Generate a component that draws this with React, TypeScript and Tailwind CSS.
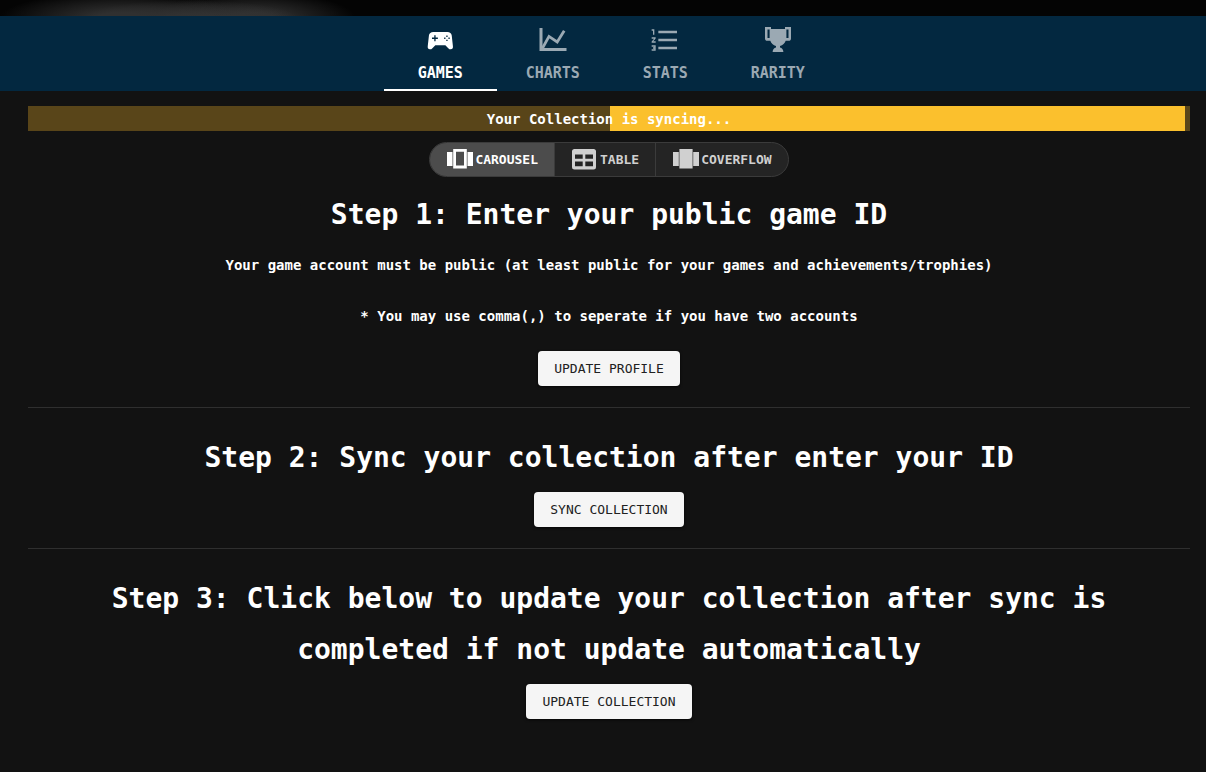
import type { ReactNode } from "react";
import { clsx } from "clsx";

function GamepadIcon() {
  return (
    <svg className="size-8" viewBox="0 0 24 24" fill="currentColor" aria-hidden="true">
      <path
        fillRule="evenodd"
        d="M21.700 16.700l-.9-8C20.600 6.900 19.300 6 17.600 6H6.900C5.200 6 3.900 6.900 3.700 8.700l-.9 8C2.600 18.200 3.300 19 4.400 19c.8 0 1.400-.3 1.900-.9L8.500 16h7.500l2.200 2.100c.5.6 1.100.9 1.900.9 1.100 0 1.800-.8 1.600-2.300zM10.400 11.200H8.700v1.800h-1v-1.800H6v-1h1.700V8.500h1v1.700h1.700zM16.700 8.700h1v1h-1zM15.100 10.200h1v1h-1zM18.300 10.200h1v1h-1zM16.700 11.800h1v1h-1z"
      />
    </svg>
  );
}

function LineChartIcon() {
  return (
    <svg className="size-8" viewBox="0 0 32 32" fill="none" stroke="currentColor" aria-hidden="true">
      <path d="M4 4v21.500H29.500" strokeWidth="3" />
      <path d="M5 25l7-12.600 8.200 5.600L27.200 6.800" strokeWidth="2.800" />
    </svg>
  );
}

function NumberedListIcon() {
  return (
    <svg className="size-8" viewBox="0 0 24 24" fill="currentColor" aria-hidden="true">
      <path d="M2 17h2v.5H3v1h1v.5H2v1h3v-4H2v1zm1-9h1V4H2v1h1v3zm-1 3h1.8L2 13.1v.9h3v-1H3.200L5 10.900V10H2v1zm5-6v2h14V5H7zm0 14h14v-2H7v2zm0-6h14v-2H7v2z" />
    </svg>
  );
}

function TrophyIcon() {
  return (
    <svg className="size-8" viewBox="0 0 32 32" fill="currentColor" aria-hidden="true">
      <path
        fillRule="evenodd"
        d="M3 3h6v2h14V3h6v11.500c0 1.400-.9 2.300-2.300 2.300h-3c-.8 2.600-2.900 4.500-5.700 5.200v1.600c2.100.6 3.200 1.900 3.400 4.400H10.600c.2-2.500 1.300-3.800 3.400-4.400V22c-2.800-.7-4.900-2.600-5.700-5.200h-3C3.900 16.800 3 15.900 3 14.500zM5.500 5.500v8.500h2.100V5.500zM24.400 5.500v8.500h2.100V5.500z"
      />
    </svg>
  );
}

function CarouselIcon() {
  return (
    <svg className="h-[22px] w-[26px]" viewBox="0 0 26 22" fill="currentColor" aria-hidden="true">
      <path fillRule="evenodd" d="M0 3h5.500v14H0zM20.500 3H26v14h-5.500zM6.200 0h13.600v19.500H6.200zM9 2.800v13.700h8V2.800z" />
    </svg>
  );
}

function TableIcon() {
  return (
    <svg className="h-[22px] w-[26px]" viewBox="0 0 26 22" fill="currentColor" aria-hidden="true">
      <path
        fillRule="evenodd"
        d="M2.500 0h19A2.500 2.500 0 0 1 24 2.500v15.500a2.500 2.500 0 0 1-2.500 2.500h-19A2.500 2.500 0 0 1 0 18V2.500A2.500 2.500 0 0 1 2.500 0zM3 5.500v4.300h7.700V5.500zM13.300 5.500v4.300H21V5.500zM3 12.500v4.700h7.700v-4.700zM13.300 12.500v4.700H21v-4.700z"
      />
    </svg>
  );
}

function CoverflowIcon() {
  return (
    <svg className="h-[22px] w-[26px]" viewBox="0 0 26 22" fill="currentColor" aria-hidden="true">
      <path d="M0 3h5.800v14H0zM20.200 3H26v14h-5.800zM6.400 0h13.200v19.500H6.400z" />
    </svg>
  );
}

const tabs = [
  { label: "GAMES", icon: <GamepadIcon />, selected: true },
  { label: "CHARTS", icon: <LineChartIcon />, selected: false },
  { label: "STATS", icon: <NumberedListIcon />, selected: false },
  { label: "RARITY", icon: <TrophyIcon />, selected: false },
];

const views = [
  { label: "CAROUSEL", icon: <CarouselIcon />, selected: true },
  { label: "TABLE", icon: <TableIcon />, selected: false },
  { label: "COVERFLOW", icon: <CoverflowIcon />, selected: false },
];

function Step({ title, action, children }: { title: string; action: string; children?: ReactNode }) {
  return (
    <section className="flex flex-col items-center text-center">
      <h2 className="max-w-[1040px] text-[28px] leading-[51px] font-bold">{title}</h2>
      {children}
      <button
        type="button"
        className="mt-[9px] h-[35px] rounded bg-[#f5f5f5] px-4 text-[13px] text-[#212121] shadow-sm shadow-black/60"
      >
        {action}
      </button>
    </section>
  );
}

export default function App() {
  return (
    <div className="min-h-screen bg-[#121212] font-['DejaVu_Sans_Mono','Liberation_Mono',monospace] text-white">
      <div className="h-4 bg-[#040404] bg-[radial-gradient(ellipse_120px_26px_at_120px_18px,#303030_20%,transparent),radial-gradient(ellipse_110px_20px_at_190px_20px,#333_30%,transparent),radial-gradient(ellipse_100px_26px_at_255px_18px,#303030_20%,transparent)]" />
      <nav className="bg-[#032840] pr-4 pl-7">
        <div role="tablist" className="mx-auto grid w-[450px] max-w-full grid-cols-4">
          {tabs.map((tab) => (
            <button
              key={tab.label}
              type="button"
              role="tab"
              aria-selected={tab.selected}
              className={clsx(
                "flex h-[75px] flex-col items-center border-b-2 pt-2 text-[15px] leading-6 font-bold",
                tab.selected ? "border-white text-white" : "border-transparent text-[#9ba9b3]",
              )}
            >
              {tab.icon}
              <span className="mt-[5px]">{tab.label}</span>
            </button>
          ))}
        </div>
      </nav>

      <main className="pt-[15px] pr-4 pb-8 pl-7">
        <div role="progressbar" aria-label="Collection sync" className="relative flex h-[25px] bg-[#594519]">
          <div className="w-[50.1%]" />
          <div className="w-[49.5%] bg-[#fbc02d]" />
          <p className="absolute inset-0 text-center text-sm leading-[26px] font-bold">Your Collection is syncing...</p>
        </div>

        <div className="mt-[11px] flex justify-center">
          <div className="flex h-[35px] divide-x divide-[#3b3b3b] overflow-hidden rounded-full border border-[#3b3b3b] bg-[#242424]">
            {views.map((view) => (
              <button
                key={view.label}
                type="button"
                aria-pressed={view.selected}
                className={clsx(
                  "flex items-center gap-0.5 pr-4 pl-[17px] text-[13px] font-bold",
                  view.selected ? "bg-[#4c4c4c] text-white" : "text-[#d0d0d0]",
                )}
              >
                {view.icon}
                {view.label}
              </button>
            ))}
          </div>
        </div>

        <div className="mt-3">
          <Step title="Step 1: Enter your public game ID" action="UPDATE PROFILE">
            <p className="text-sm leading-[51px] font-bold">
              Your game account must be public (at least public for your games and achievements/trophies)
            </p>
            <p className="text-sm leading-[51px] font-bold">
              * You may use comma(,) to seperate if you have two accounts
            </p>
          </Step>
          <hr className="mt-[21px] mb-6 border-[#2f2f2f]" />
          <Step title="Step 2: Sync your collection after enter your ID" action="SYNC COLLECTION" />
          <hr className="mt-[21px] mb-6 border-[#2f2f2f]" />
          <Step
            title="Step 3: Click below to update your collection after sync is completed if not update automatically"
            action="UPDATE COLLECTION"
          />
        </div>
      </main>
    </div>
  );
}
